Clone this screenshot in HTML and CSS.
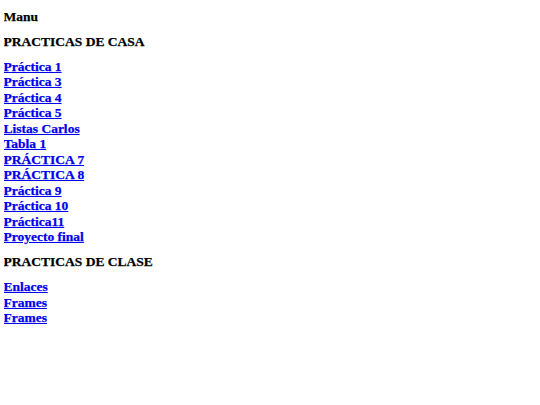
FILE: index.html
```html
<!DOCTYPE html>
<html lang="es">
<head>
<meta charset="utf-8">
<title>Manu</title>
<link rel="stylesheet" href="styles.css">
</head>
<body>
<h1 class="title">Manu</h1>
<h2 class="section">PRACTICAS DE CASA</h2>
<ul class="links">
<li><a href="#">Práctica 1</a></li>
<li><a href="#">Práctica 3</a></li>
<li><a href="#">Práctica 4</a></li>
<li><a href="#">Práctica 5</a></li>
<li><a href="#">Listas Carlos</a></li>
<li><a href="#">Tabla 1</a></li>
<li><a href="#">PRÁCTICA 7</a></li>
<li><a href="#">PRÁCTICA 8</a></li>
<li><a href="#">Práctica 9</a></li>
<li><a href="#">Práctica 10</a></li>
<li><a href="#">Práctica11</a></li>
<li><a href="#">Proyecto final</a></li>
</ul>
<h2 class="section">PRACTICAS DE CLASE</h2>
<ul class="links">
<li><a href="#">Enlaces</a></li>
<li><a href="#">Frames</a></li>
<li><a href="#">Frames</a></li>
</ul>
</body>
</html>
```
FILE: styles.css
```css
body {
  margin: 0 3.5px;
  font-family: "Liberation Serif", "Times New Roman", serif;
  font-size: 13.5px;
  line-height: 15.5px;
  font-weight: bold;
  color: #000;
  background: #fff;
  -webkit-text-stroke: 0.25px currentColor;
}
.title, .section {
  font-size: 13.5px;
  font-weight: bold;
  margin: 9.5px 0;
  line-height: 15.5px;
}
.title {
  margin-top: 8.5px;
}
.links {
  list-style: none;
  margin: 9.5px 0;
  padding: 0;
}
.links a {
  color: #0000ee;
  text-decoration: underline;
}
```
